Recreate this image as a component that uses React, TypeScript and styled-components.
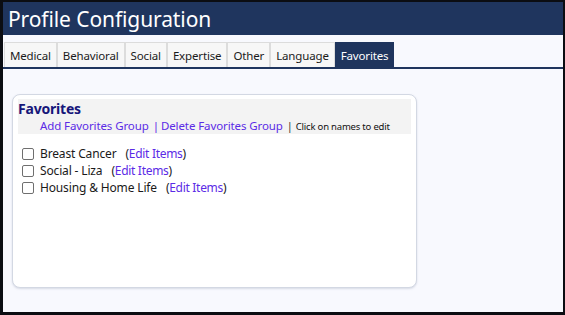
import React from "react";
import styled, { createGlobalStyle } from "styled-components";

const Global = createGlobalStyle`
  html, body { margin: 0; padding: 0; background: #000; }
  body { font-family: "Noto Sans", "Open Sans", Arial, sans-serif; }
  * { box-sizing: border-box; }
`;

const Frame = styled.div`
  width: 565px;
  height: 315px;
  background: #0b0d12;
  padding: 2px 2px 3px 3px;
  display: flex;
`;

const Window = styled.div`
  flex: 1;
  display: flex;
  flex-direction: column;
  background: #f8f9fe;
  overflow: hidden;
`;

const Header = styled.div`
  height: 33px;
  background: #1f355e;
  color: #fff;
  font-size: 21px;
  line-height: 34px;
  padding-left: 5px;
  letter-spacing: -0.1px;
`;

const TabBar = styled.div`
  display: flex;
  padding: 7px 0 0 1px;
  border-bottom: 2px solid #1f355e;
`;

const Tab = styled.div<{ $active?: boolean }>`
  height: 25px;
  padding: 1px 5px 0;
  display: flex;
  align-items: center;
  font-size: 11.5px;
  letter-spacing: -0.15px;
  color: ${(p) => (p.$active ? "#ffffff" : "#1b1b1b")};
  background: ${(p) => (p.$active ? "#1f355e" : "#f7f7f7")};
  border: 1px solid ${(p) => (p.$active ? "#1f355e" : "#dcdcdc")};
  border-bottom: none;
`;

const Content = styled.div`
  padding: 25px 0 0 9px;
`;

const Card = styled.div`
  width: 405px;
  height: 194px;
  background: #fff;
  border: 1px solid #d3d8e3;
  border-radius: 8px;
  box-shadow: 0 1px 2px rgba(120, 130, 160, 0.25);
  padding: 4px 5px;
`;

const CardHead = styled.div`
  background: #f3f3f3;
  height: 35px;
  padding-top: 1px;
`;

const Title = styled.div`
  font-size: 14px;
  font-weight: 700;
  color: #16167a;
  line-height: 18px;
  letter-spacing: -0.2px;
`;

const LinkRow = styled.div`
  display: flex;
  align-items: baseline;
  padding-left: 22px;
  margin-top: 1px;
  font-size: 11.5px;
  line-height: 14px;
  letter-spacing: -0.1px;
`;

const Link = styled.span`
  color: #5b2be6;
  cursor: pointer;
`;

const Sep = styled.span`
  color: #5b2be6;
  margin: 0 2px 0 4px;
`;

const Hint = styled.span`
  font-size: 9.5px;
  color: #111;
  letter-spacing: -0.2px;
`;

const HintSep = styled.span`
  color: #333;
  font-size: 11px;
  margin: 0 3px 0 4px;
`;

const List = styled.div`
  display: flex;
  flex-direction: column;
  padding-top: 11px;
  padding-left: 4px;
`;

const Row = styled.label`
  display: flex;
  align-items: center;
  height: 17px;
  font-size: 12px;
  color: #1a1a1a;
  letter-spacing: -0.15px;
`;

const Check = styled.input`
  appearance: none;
  width: 12px;
  height: 12px;
  margin: 0 6px 0 0;
  border: 1px solid #6f6f6f;
  border-radius: 2px;
  background: #fff;
`;

const Edit = styled.span`
  margin-left: 9px;
  letter-spacing: -0.3px;
`;

const items = ["Breast Cancer", "Social - Liza", "Housing & Home Life"];
const tabs = ["Medical", "Behavioral", "Social", "Expertise", "Other", "Language", "Favorites"];

export default function App() {
  return (
    <>
      <Global />
      <Frame>
        <Window>
          <Header>Profile Configuration</Header>
          <TabBar>
            {tabs.map((t) => (
              <Tab key={t} $active={t === "Favorites"}>
                {t}
              </Tab>
            ))}
          </TabBar>
          <Content>
            <Card>
              <CardHead>
                <Title>Favorites</Title>
                <LinkRow>
                  <Link>Add Favorites Group</Link>
                  <Sep>|</Sep>
                  <Link>Delete Favorites Group</Link>
                  <HintSep>|</HintSep>
                  <Hint>Click on names to edit</Hint>
                </LinkRow>
              </CardHead>
              <List>
                {items.map((i) => (
                  <Row key={i}>
                    <Check type="checkbox" />
                    {i}
                    <Edit>
                      (<Link>Edit Items</Link>)
                    </Edit>
                  </Row>
                ))}
              </List>
            </Card>
          </Content>
        </Window>
      </Frame>
    </>
  );
}
